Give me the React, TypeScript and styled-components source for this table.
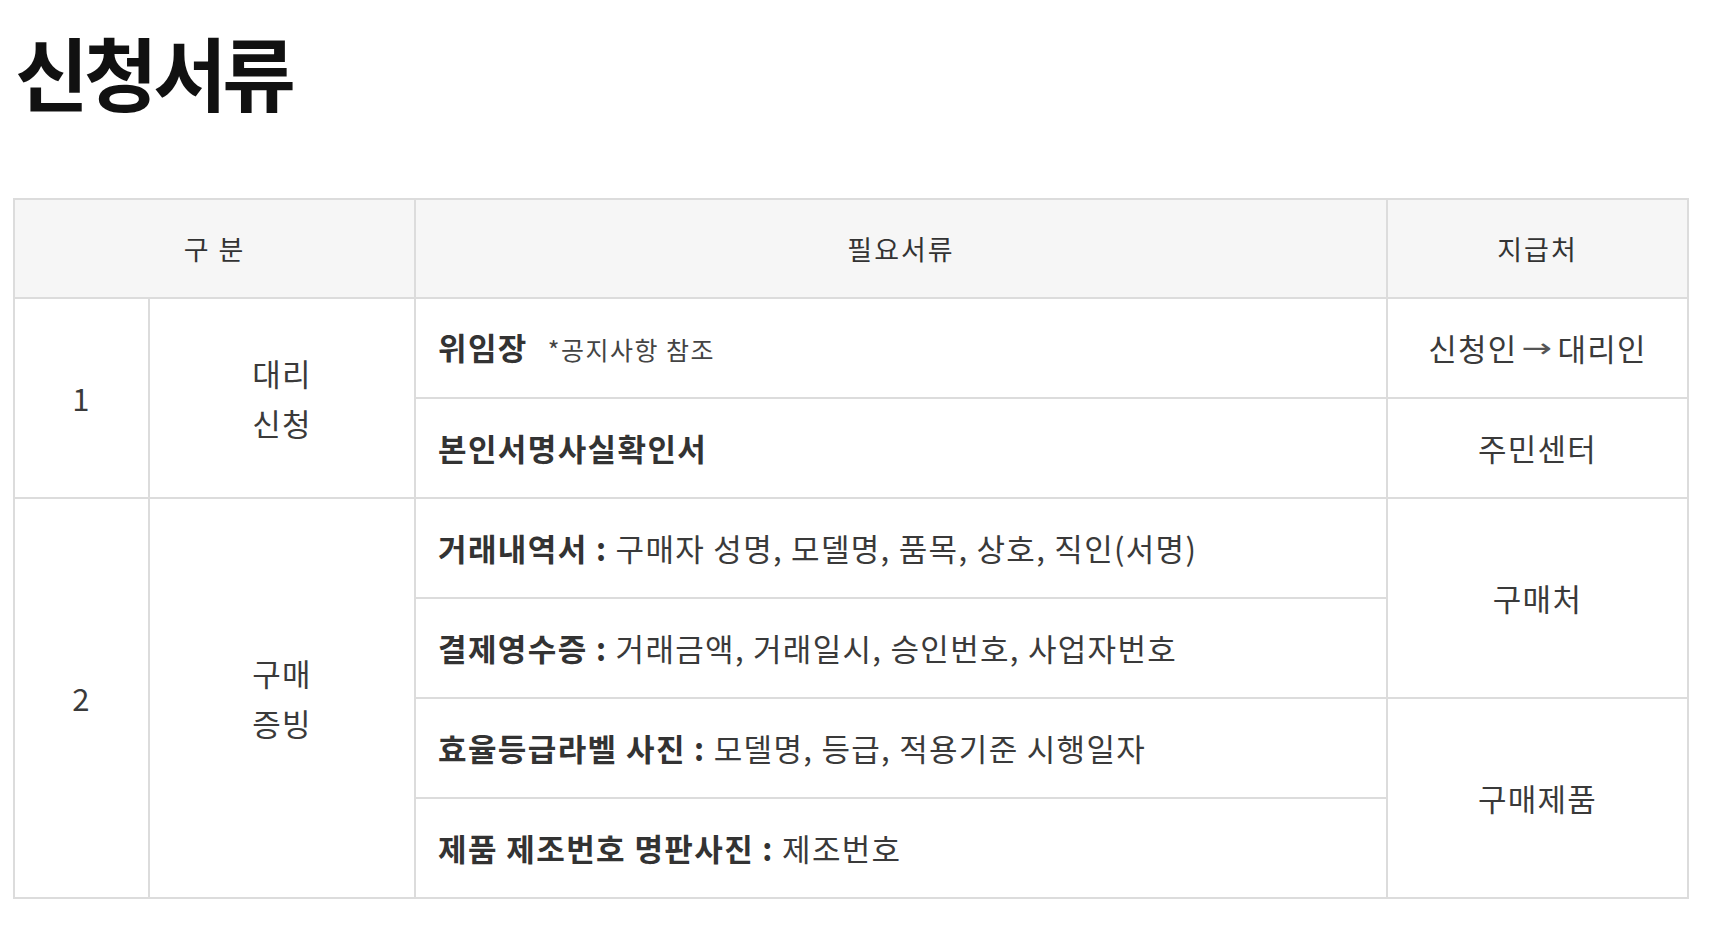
import React from 'react';
import styled, { createGlobalStyle } from 'styled-components';

const GlobalStyle = createGlobalStyle`
  html, body {
    margin: 0;
    padding: 0;
    background: #ffffff;
  }
  body {
    font-family: "Noto Sans CJK KR", "Noto Sans", sans-serif;
  }
`;

const Page = styled.div`
  padding: 30px 27px 40px 13px;
`;

const Title = styled.h2`
  margin: 0 0 0 2px;
  font-size: 80px;
  line-height: 1;
  font-weight: 700;
  letter-spacing: -4.5px;
  color: #111;
`;

const Table = styled.table`
  margin-top: 88px;
  width: 100%;
  border-collapse: collapse;
  table-layout: fixed;
  border: 2px solid #dcdcdc;
`;

const Th = styled.th`
  height: 97px;
  padding: 0;
  background: #f6f6f6;
  border: 2px solid #dcdcdc;
  font-size: 27px;
  font-weight: 400;
  color: #333;
  letter-spacing: 2px;
  text-align: center;
  vertical-align: middle;
`;

const Td = styled.td<{ $align?: 'left' | 'center' }>`
  height: 98px;
  border: 2px solid #dcdcdc;
  padding: 0 ${(p) => (p.$align === 'left' ? '22px' : '0')};
  font-size: 31px;
  line-height: 50px;
  color: #3a3a3a;
  letter-spacing: 1.3px;
  text-align: ${(p) => p.$align ?? 'center'};
  vertical-align: middle;
`;

const Strong = styled.b`
  font-weight: 700;
  color: #333;
  letter-spacing: 1.4px;
`;

const Note = styled.span`
  margin-left: 20px;
  font-size: 25px;
  color: #444;
  letter-spacing: 1.5px;
`;

const Arrow = styled.span`
  display: inline-block;
  margin: 0 10px 0 8px;
  font-family: "DejaVu Sans", sans-serif;
  font-size: 26px;
  line-height: 1;
  font-weight: 400;
  color: #555;
  letter-spacing: 0;
  transform: translateY(-4px) scaleX(1.4);
`;

interface Doc {
  name: string;
  detail?: string;
  note?: string;
}

const Docs: React.FC<{ doc: Doc }> = ({ doc }) => (
  <>
    <Strong>{doc.name}</Strong>
    {doc.detail && <> <Strong>:</Strong> {doc.detail}</>}
    {doc.note && <Note>{doc.note}</Note>}
  </>
);

const App: React.FC = () => {
  return (
    <Page>
      <GlobalStyle />
      <Title>신청서류</Title>
      <Table>
        <colgroup>
          <col style={{ width: 135 }} />
          <col style={{ width: 266 }} />
          <col style={{ width: 972 }} />
          <col style={{ width: 301 }} />
        </colgroup>
        <thead>
          <tr>
            <Th colSpan={2}>구 분</Th>
            <Th>필요서류</Th>
            <Th>지급처</Th>
          </tr>
        </thead>
        <tbody>
          <tr>
            <Td rowSpan={2}>1</Td>
            <Td rowSpan={2}>대리<br />신청</Td>
            <Td $align="left"><Docs doc={{ name: '위임장', note: '*공지사항 참조' }} /></Td>
            <Td>신청인<Arrow>→</Arrow>대리인</Td>
          </tr>
          <tr>
            <Td $align="left"><Docs doc={{ name: '본인서명사실확인서' }} /></Td>
            <Td>주민센터</Td>
          </tr>
          <tr>
            <Td rowSpan={4}>2</Td>
            <Td rowSpan={4}>구매<br />증빙</Td>
            <Td $align="left"><Docs doc={{ name: '거래내역서', detail: '구매자 성명, 모델명, 품목, 상호, 직인(서명)' }} /></Td>
            <Td rowSpan={2}>구매처</Td>
          </tr>
          <tr>
            <Td $align="left"><Docs doc={{ name: '결제영수증', detail: '거래금액, 거래일시, 승인번호, 사업자번호' }} /></Td>
          </tr>
          <tr>
            <Td $align="left"><Docs doc={{ name: '효율등급라벨 사진', detail: '모델명, 등급, 적용기준 시행일자' }} /></Td>
            <Td rowSpan={2}>구매제품</Td>
          </tr>
          <tr>
            <Td $align="left"><Docs doc={{ name: '제품 제조번호 명판사진', detail: '제조번호' }} /></Td>
          </tr>
        </tbody>
      </Table>
    </Page>
  );
};

export default App;
